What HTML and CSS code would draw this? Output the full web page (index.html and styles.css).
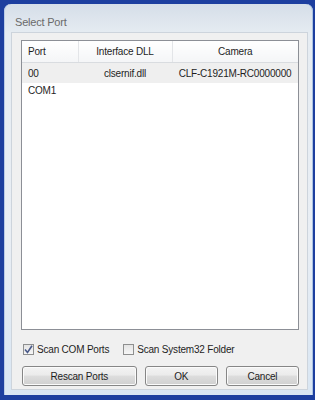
FILE: index.html
```html
<!DOCTYPE html>
<html lang="en">
<head>
    <meta charset="UTF-8">
    <title>Select Port</title>
    <link rel="stylesheet" href="styles.css">
</head>
<body>
    <div class="window">
        <div class="titlebar">Select Port</div>
        <div class="client">
            <div class="listbox">
                <table class="ports">
                    <thead>
                        <tr>
                            <th class="col-port">Port</th>
                            <th class="col-dll">Interface DLL</th>
                            <th class="col-cam">Camera</th>
                        </tr>
                    </thead>
                    <tbody>
                        <tr class="selected">
                            <td>00</td>
                            <td class="center">clsernif.dll</td>
                            <td class="center">CLF-C1921M-RC0000000</td>
                        </tr>
                        <tr class="plain">
                            <td>COM1</td>
                            <td></td>
                            <td></td>
                        </tr>
                    </tbody>
                </table>
            </div>

            <div class="options">
                <label class="check">
                    <span class="box">
                        <svg width="9" height="9" viewBox="0 0 9 9"><path d="M1 4.5 L3.5 7.5 L8 0.8" fill="none" stroke="#4a5a8a" stroke-width="1.6"/></svg>
                    </span>
                    Scan COM Ports
                </label>
                <label class="check">
                    <span class="box"></span>
                    Scan System32 Folder
                </label>
            </div>

            <div class="buttons">
                <button class="btn wide">Rescan Ports</button>
                <button class="btn">OK</button>
                <button class="btn">Cancel</button>
            </div>
        </div>
    </div>
</body>
</html>
```

FILE: styles.css
```css
html, body {
    margin: 0;
    height: 100%;
}
body {
    background-color: #1d3f9f;
    font-family: "Liberation Sans", Arial, sans-serif;
    font-size: 10px;
    letter-spacing: -0.2px;
    color: #1e1e1e;
    overflow: hidden;
}
.window {
    box-sizing: border-box;
    margin: 4px 0 0 4px;
    width: 309px;
    height: 391px;
    padding: 0 5px 5px 7px;
    border-radius: 7px 7px 0 0;
    background: linear-gradient(to bottom, #d5dee8 0, #e6ecf2 30px, #e9eef4 60%, #d9e6f3 100%);
    box-shadow: inset 1px 0 0 #b9cbe6, inset -1px 0 0 #aac2e2;
    display: flex;
    flex-direction: column;
}
.titlebar {
    height: 28px;
    padding: 11px 0 0 4px;
    box-sizing: border-box;
    line-height: 14px;
    font-size: 11px;
    color: #6a6a6a;
}
.client {
    flex: 1;
    background-color: #f0f0f0;
    border: 1px solid #cdd4dc;
    padding: 7px 8px 3px 9px;
    display: flex;
    flex-direction: column;
}
.listbox {
    flex: 1;
    background-color: #fff;
    border: 1px solid #8c8f96;
}
.ports {
    width: 100%;
    border-collapse: collapse;
    table-layout: fixed;
}
.ports th {
    height: 21px;
    padding: 0;
    font-weight: normal;
    background: linear-gradient(to bottom, #ffffff, #f4f5f7);
    border-right: 1px solid #e3e5e8;
    border-bottom: 1px solid #d9dce0;
}
.ports th:last-child {
    border-right: none;
}
.col-port {
    width: 56px;
    text-align: left;
    padding-left: 6px !important;
    box-sizing: border-box;
}
.col-dll {
    width: 93px;
}
.ports td {
    padding: 0 0 0 6px;
    white-space: nowrap;
}
.ports td.center {
    text-align: center;
    padding: 0;
}
.selected td {
    height: 20px;
    background-color: #efefef;
}
.plain td {
    height: 15px;
}
.options {
    height: 36px;
    display: flex;
    align-items: center;
    gap: 14px;
    padding-left: 2px;
    padding-top: 2px;
    box-sizing: border-box;
}
.check {
    display: flex;
    align-items: center;
    gap: 3px;
}
.box {
    width: 9px;
    height: 9px;
    border: 1px solid #8e8f8f;
    background: linear-gradient(to bottom, #e4e4e4, #f6f6f6);
    display: flex;
    align-items: center;
    justify-content: center;
}
.buttons {
    display: flex;
    gap: 8px;
    padding-left: 1px;
}
.btn {
    width: 74px;
    height: 20px;
    padding: 0;
    font-family: inherit;
    font-size: 10px;
    letter-spacing: -0.2px;
    color: #1e1e1e;
    border: 1px solid #868686;
    border-radius: 3px;
    background: linear-gradient(to bottom, #f3f3f3 0, #ebebeb 45%, #dddddd 50%, #d0d0d0 100%);
    box-shadow: inset 0 0 0 1px #fbfbfb;
}
.btn.wide {
    width: 116px;
}
```
